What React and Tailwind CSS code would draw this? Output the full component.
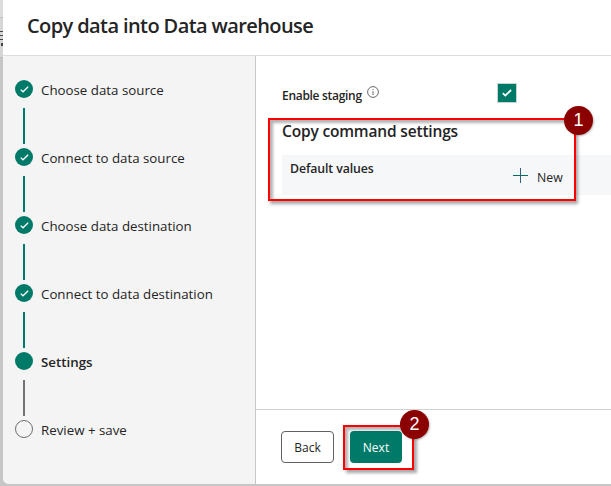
import React from 'react';

const steps = [
  { label: 'Choose data source', state: 'done' },
  { label: 'Connect to data source', state: 'done' },
  { label: 'Choose data destination', state: 'done' },
  { label: 'Connect to data destination', state: 'done' },
  { label: 'Settings', state: 'current' },
  { label: 'Review + save', state: 'todo' },
];

function Check({ className, strokeWidth = 1.3 }) {
  return (
    <svg className={className} viewBox="0 0 9 7" fill="none" stroke="white" strokeWidth={strokeWidth}>
      <path d="M0.7 3.6 3 5.8 8.2 0.8" />
    </svg>
  );
}

function StepDot({ state }) {
  if (state === 'todo') {
    return <span className="size-[18px] rounded-full border border-[#6e6e6e]" />;
  }
  return (
    <span className="flex size-[18px] items-center justify-center rounded-full bg-[#007a68]">
      {state === 'done' && <Check className="h-[7px] w-[9px]" />}
    </span>
  );
}

function Callout({ children, className }) {
  return (
    <span
      className={`absolute flex size-[29px] items-center justify-center rounded-full bg-[#8b0000] pb-px font-['Liberation_Sans',sans-serif] text-[18px] leading-none text-white shadow-[1px_1px_2px_rgba(0,0,0,0.25)] ${className}`}
    >
      {children}
    </span>
  );
}

export default function App() {
  return (
    <div className="relative h-[486px] w-[611px] overflow-hidden bg-[#c6c6c6] pl-[3px] font-['Open_Sans','Noto_Sans',sans-serif] text-[#242424]">
      <div className="absolute top-0 left-0 h-[17px] w-[3px] bg-[#dcdcdc]" />
      <div className="absolute top-[17px] left-0 h-[41px] w-[3px] border-y border-[#bebebe] bg-[#d6d6d6]">
        <div className="mt-[13px] h-px bg-[#444]" />
        <div className="mt-[3px] h-px bg-[#444]" />
        <div className="mt-[3px] h-px bg-[#444]" />
        <div className="mt-[3px] ml-px h-[3px] w-[2px] bg-[#444]" />
      </div>
      <div className="relative flex h-[484px] flex-col overflow-hidden rounded-bl-[6px] bg-white">
        <header className="h-14 shrink-0 border-b border-[#dcdcdc] pt-[12px] pl-6">
          <h1 className="text-[20px] leading-7 font-[550] tracking-[-0.6px] whitespace-nowrap">Copy data into Data warehouse</h1>
        </header>
        <div className="flex min-h-0 flex-1">
          <nav className="w-[253px] shrink-0 border-r border-[#c8c8c8] bg-[#f4f4f4] pt-6 pl-3">
            {steps.map((step, i) => (
              <div key={step.label} className="h-[68px]">
                <div className="flex h-[18px] items-center gap-2">
                  <StepDot state={step.state} />
                  <span
                    className={`relative top-px text-[13.3px] leading-[18px] whitespace-nowrap ${step.state === 'current' ? 'font-semibold' : ''}`}
                  >
                    {step.label}
                  </span>
                </div>
                {i < steps.length - 1 && (
                  <div
                    className={`mt-[10px] ml-2 h-9 w-[2px] ${step.state === 'done' ? 'bg-[#007a68]' : 'bg-[#737373]'}`}
                  />
                )}
              </div>
            ))}
          </nav>
          <main className="flex min-w-0 flex-1 flex-col">
            <section className="h-[353px] pl-[26px]">
              <div className="flex h-[65px] items-start pt-[27px]">
                <div className="flex w-[216px] items-start gap-[5px]">
                  <span className="mt-[5px] text-[12px] leading-4 font-[550] tracking-[-0.3px] whitespace-nowrap">Enable staging</span>
                  <svg className="mt-[3px] size-3" viewBox="0 0 12 12" fill="none" stroke="#424242" strokeWidth="0.8">
                    <circle cx="6" cy="6" r="5.4" />
                    <path d="M6 5.2V9M6 3V4" />
                  </svg>
                </div>
                <span className="-ml-px flex h-5 w-5 items-center justify-center border border-[#c4d5d2] bg-[#007a68]">
                  <Check className="h-[8px] w-[10px]" strokeWidth={1.6} />
                </span>
              </div>
              <h2 className="h-[34px] text-[15.5px] leading-[20px] font-[550] tracking-[-0.17px] whitespace-nowrap">Copy command settings</h2>
              <div className="flex h-10 items-start bg-[#f5f7f9] pl-2">
                <span className="mt-[6px] w-[223px] text-[12.3px] leading-4 font-[550] tracking-[-0.1px] whitespace-nowrap">Default values</span>
                <svg className="mt-[13px] size-[15px]" viewBox="0 0 15 15" fill="none" strokeWidth="1">
                  <path d="M7.5 0V15" stroke="#35617f" />
                  <path d="M0 7.5H15" stroke="#00705f" />
                </svg>
                <span className="mt-[15px] ml-[9px] text-[12.3px] leading-4">New</span>
              </div>
            </section>
            <footer className="flex flex-1 items-start gap-4 border-t border-[#d1d1d1] pt-[21px] pl-[25px]">
              <button className="h-8 w-[53px] rounded-[4px] border border-[#616161] bg-white pt-px text-[12px]">Back</button>
              <button className="h-8 w-[52px] rounded-[4px] bg-[#007a68] pt-px text-[12px] font-medium text-white">Next</button>
            </footer>
          </main>
        </div>
      </div>
      <div className="absolute top-[118px] left-[268px] h-[83px] w-[308px] border-2 border-[#ff0000] shadow-[2px_3px_3px_rgba(0,0,0,0.35),inset_3px_3px_3px_rgba(0,0,0,0.3)]" />
      <Callout className="top-[106px] left-[564px]">1</Callout>
      <div className="absolute top-[425px] left-[343px] h-[45px] w-[71px] border-2 border-[#ff0000] shadow-[3px_3px_3px_rgba(0,0,0,0.35),inset_3px_3px_3px_rgba(0,0,0,0.3)]" />
      <Callout className="top-[410px] left-[400px]">2</Callout>
    </div>
  );
}
